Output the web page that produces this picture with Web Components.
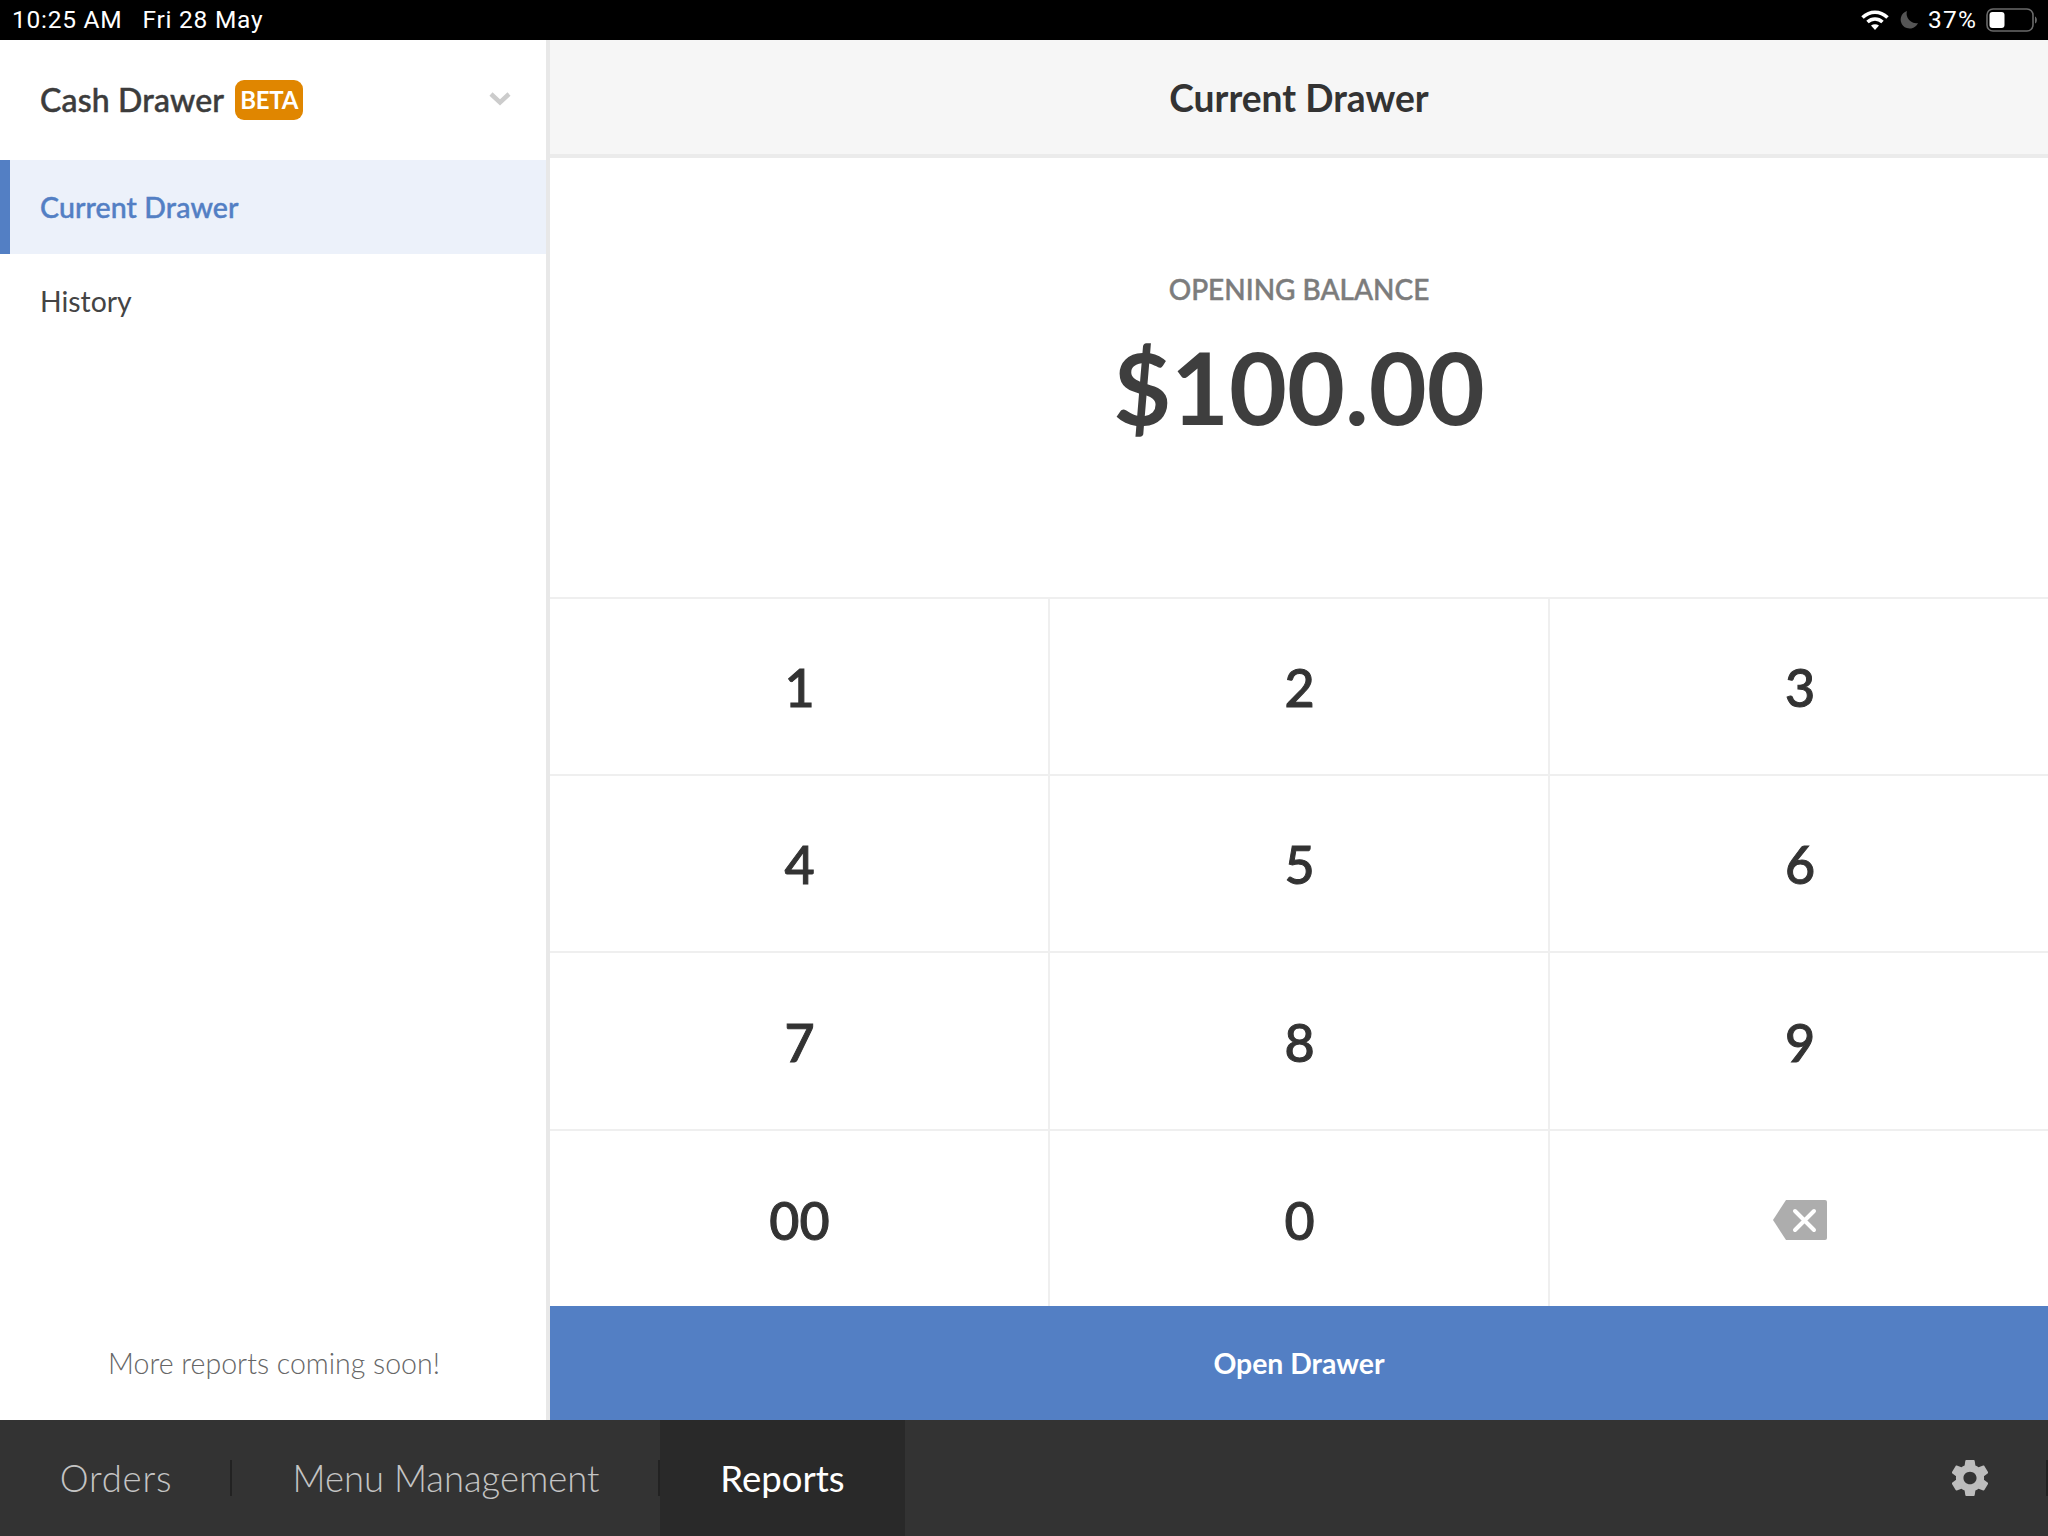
<!DOCTYPE html>
<html><head><meta charset="utf-8">
<style>
html,body{margin:0;padding:0;height:100%;overflow:hidden;background:#fff;font-family:Lato,"Open Sans",sans-serif}
pos-app{display:flex}
</style></head><body>
<pos-app></pos-app>
<template id="t-app"><style>
:host{display:flex;flex-direction:column;width:2048px;height:1536px}
.mid{flex:1;display:flex;min-height:0}
</style>
<status-bar></status-bar>
<div class="mid"><side-nav></side-nav><drawer-panel></drawer-panel></div>
<tab-bar></tab-bar></template>

<template id="t-status"><style>
:host{display:flex;align-items:center;height:40px;background:#000;color:#fff;font:400 24.5px/40px Roboto,sans-serif;letter-spacing:.75px;padding:0 10px 0 12px;box-sizing:border-box;flex:none}
.d{margin-left:20px}.sp{flex:1}
svg{display:block;flex:none}
.pct{flex:none;width:51px;margin:0 7px 0 9px;letter-spacing:1.2px;white-space:nowrap}
</style>
<span>10:25 AM</span><span class="d">Fri 28 May</span><span class="sp"></span>
<svg width="30" height="22" viewBox="0 0 30 22" style="margin-right:9px"><g fill="none" stroke="#fff" stroke-width="3.6"><path d="M2.5 8.5C10 1.5 20 1.5 27.5 8.5"/><path d="M7.5 13C12 9 18 9 22.500 13"/></g><path d="M11 16.500C13.500 14.800 16.500 14.800 19 16.500L15 21Z" fill="#fff"/></svg>
<svg width="20" height="20" viewBox="0 0 20 20"><path d="M8 1A9 9 0 1 0 19 13A9.500 9.500 0 0 1 8 1Z" fill="#555"/></svg>
<span class="pct">37%</span>
<svg width="52" height="24" viewBox="0 0 52 24"><rect x="1" y="1" width="46" height="22" rx="6" fill="none" stroke="#6a6a6a" stroke-width="1.600"/><rect x="3.500" y="4" width="15" height="16" rx="3" fill="#fff"/><path d="M49 8.500C51.500 9.500 51.500 14.500 49 15.500Z" fill="#6a6a6a"/></svg>
</template>

<template id="t-side"><style>
:host{display:flex;flex-direction:column;flex:none;width:550px;box-sizing:border-box;border-right:4px solid #e8e8e8;background:#fff;color:#3c3c3c}
.h{height:120px;display:flex;align-items:center;padding:0 34px 0 40px;flex:none}
.t{font-size:32px;font-weight:500;-webkit-text-stroke:.5px #3c3c3c;margin-right:11px;letter-spacing:.18px;position:relative;top:-1px}
.sp{flex:1}
.list{flex:1}
.foot{height:114px;display:flex;align-items:center;justify-content:center;padding-left:2px;box-sizing:border-box;font-size:28.5px;font-weight:300;color:#666;flex:none}
svg{position:relative;top:-1px}
</style>
<div class="h"><span class="t">Cash Drawer</span><beta-badge>BETA</beta-badge><span class="sp"></span>
<svg width="24" height="16" viewBox="0 0 24 16"><path d="M3 3L12 11.500L21 3" fill="none" stroke="#ccc" stroke-width="4.500"/></svg></div>
<div class="list"><nav-item active>Current Drawer</nav-item><nav-item>History</nav-item></div>
<div class="foot">More reports coming soon!</div></template>

<template id="t-beta"><style>
:host{display:inline-flex;align-items:center;justify-content:center;width:68px;height:40px;margin-top:-1px;border-radius:9px;background:#e08600;color:#fff;font-size:24px;font-weight:700;letter-spacing:-.3px}
</style><slot></slot></template>

<template id="t-nav"><style>
:host{display:flex;align-items:center;height:94px;box-sizing:border-box;padding-left:40px;font-size:28.4px;font-weight:400;color:#444}
:host([active]){background:#ecf1fa;color:#537fc4;font-weight:500;-webkit-text-stroke:.45px #537fc4;padding-left:30px;border-left:10px solid #537fc4;font-size:28.5px;letter-spacing:.12px}
</style><slot></slot></template>

<template id="t-panel"><style>
:host{flex:1;display:flex;flex-direction:column;min-width:0;background:#fff}
.h{height:118px;flex:none;box-sizing:border-box;background:#f6f6f6;border-bottom:4px solid #ebebeb;display:flex;align-items:center;justify-content:center;font-size:37.2px;font-weight:700;color:#333}
.b{height:439px;flex:none;display:flex;flex-direction:column;align-items:center;box-sizing:border-box;padding-top:115px}
.l{font-size:28px;line-height:32px;font-weight:500;-webkit-text-stroke:.5px #7c7c7c;color:#7c7c7c}
.v{font-size:100px;line-height:120px;font-weight:700;color:#3e3e3e;margin-top:21px}
.o{height:114px;flex:none;background:#537fc4;color:#fff;font-size:28.4px;font-weight:700;display:flex;align-items:center;justify-content:center}
</style>
<div class="h">Current Drawer</div>
<div class="b"><div class="l">OPENING BALANCE</div><div class="v">$100.00</div></div>
<key-pad></key-pad>
<div class="o">Open Drawer</div></template>

<template id="t-pad"><style>
:host{flex:1;min-height:0;display:grid;grid-template-columns:500px 500px 1fr;grid-template-rows:177px 177px 178px 1fr}
</style>
<pad-key>1</pad-key><pad-key>2</pad-key><pad-key last>3</pad-key>
<pad-key>4</pad-key><pad-key>5</pad-key><pad-key last>6</pad-key>
<pad-key low>7</pad-key><pad-key low>8</pad-key><pad-key low last>9</pad-key>
<pad-key low>00</pad-key><pad-key low>0</pad-key>
<pad-key low last><svg width="54" height="40" viewBox="0 0 54 40" style="display:block"><path d="M13 0H52A2 2 0 0 1 54 2V38A2 2 0 0 1 52 40H13L0 20Z" fill="#adadad"/><path d="M22 11L41 30M41 11L22 30" stroke="#fff" stroke-width="4" stroke-linecap="round"/></svg></pad-key></template>

<template id="t-key"><style>
:host{display:flex;align-items:center;justify-content:center;box-sizing:border-box;padding-left:1px;border-right:2px solid #efefef;border-top:2px solid #efefef;font-size:52px;font-weight:500;-webkit-text-stroke:1px #333;color:#333}
:host([last]){border-right:0;padding-left:2px}
:host([low]){padding-top:2px}
</style><slot></slot></template>

<template id="t-tabs"><style>
:host{display:flex;height:116px;flex:none;background:#333;align-items:stretch;position:relative}
.sp{flex:1}
.gear{display:flex;align-items:center;padding-right:60px}
.r{width:2px;height:36px;align-self:center;background:#222;position:absolute;right:0}
svg{display:block}
</style>
<tab-item sep style="width:232px;letter-spacing:.8px;font-size:36.5px">Orders</tab-item>
<tab-item sep style="width:428px;font-size:36.4px">Menu Management</tab-item>
<tab-item active style="width:245px;font-size:36.5px">Reports</tab-item>
<span class="sp"></span>
<div class="gear"><svg width="36" height="36" viewBox="2.4 2 19.2 20" preserveAspectRatio="none"><path fill="#bdbdbd" fill-rule="evenodd" d="M19.43 12.98c.04-.32.07-.64.07-.98s-.03-.66-.07-.98l2.11-1.65c.19-.15.24-.42.12-.64l-2-3.46c-.12-.22-.39-.3-.61-.22l-2.49 1c-.52-.4-1.08-.73-1.69-.98l-.38-2.65C14.46 2.18 14.25 2 14 2h-4c-.25 0-.46.18-.49.42l-.38 2.65c-.61.25-1.17.59-1.69.98l-2.49-1c-.23-.09-.49 0-.61.22l-2 3.46c-.13.22-.07.49.12.64l2.11 1.65c-.04.32-.07.65-.07.98s.03.66.07.98l-2.11 1.65c-.19.15-.24.42-.12.64l2 3.46c.12.22.39.3.61.22l2.49-1c.52.4 1.08.73 1.69.98l.38 2.65c.03.24.24.42.49.42h4c.25 0 .46-.18.49-.42l.38-2.65c.61-.25 1.17-.59 1.69-.98l2.49 1c.23.09.49 0 .61-.22l2-3.46c.12-.22.07-.49-.12-.64l-2.11-1.65zM12 15.500c-1.930 0-3.500-1.570-3.500-3.500s1.570-3.500 3.500-3.500 3.500 1.570 3.500 3.500-1.570 3.500-3.500 3.500z"/></svg></div>
<span class="r"></span></template>

<template id="t-tab"><style>
:host{display:flex;align-items:center;justify-content:center;box-sizing:border-box;font-size:36px;font-weight:300;color:#c4c4c4;position:relative}
:host([active]){background:#292929;color:#fff;font-weight:400}
:host([sep])::after{content:"";position:absolute;right:0;top:40px;height:36px;width:2px;background:#222}
</style><slot></slot></template>

<script>
const defs={'pos-app':'t-app','status-bar':'t-status','side-nav':'t-side','beta-badge':'t-beta','nav-item':'t-nav','drawer-panel':'t-panel','key-pad':'t-pad','pad-key':'t-key','tab-bar':'t-tabs','tab-item':'t-tab'};
for(const [n,id] of Object.entries(defs)){
 customElements.define(n,class extends HTMLElement{constructor(){super();this.attachShadow({mode:'open'}).appendChild(document.getElementById(id).content.cloneNode(true));}});
}
</script>
</body></html>
